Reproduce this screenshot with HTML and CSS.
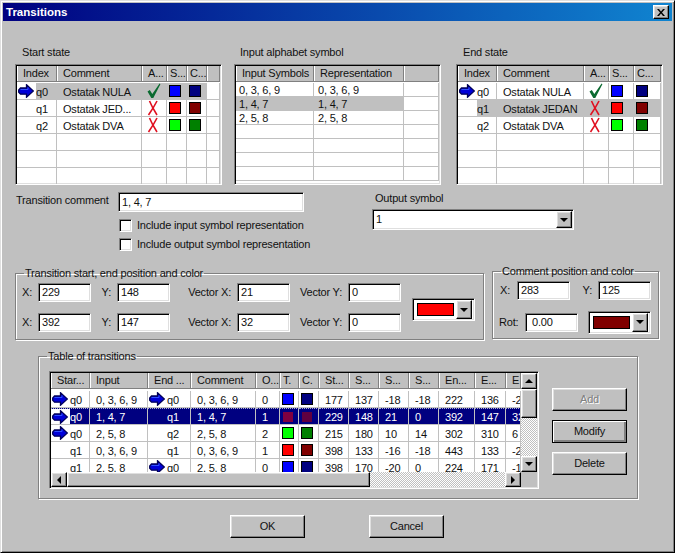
FILE: index.html
```html
<!DOCTYPE html>
<html lang="en">
<head>
<meta charset="utf-8">
<title>Transitions</title>
<link rel="stylesheet" href="styles.css">
</head>
<body>
<svg class="defs" width="0" height="0" aria-hidden="true">
  <symbol id="arrow" viewBox="0 0 16 14"><path d="M8.5 .8 L15.4 7 L8.5 13.2 V10.2 H2.5 L.7 8.2 V6 L2.5 4 H8.5 Z" fill="#0000d8" stroke="#00005a" stroke-width="1.3"/><path d="M2.5 5.5 H10 V3.5" fill="none" stroke="#3050ff" stroke-width="1"/></symbol>
  <symbol id="check" viewBox="0 0 14 16"><path d="M.5 8.5 L2.8 7 L5.3 11 L12.6 .6 L13.4 1.2 L6.3 15 H4.3 Z" fill="#0a6a30"/></symbol>
  <symbol id="cross" viewBox="0 0 12 16"><path d="M2.5 1 Q5 7 10 15 M10 1 Q7 7 1.5 15" fill="none" stroke="#e01020" stroke-width="1.6"/></symbol>
  <symbol id="x-close" viewBox="0 0 8 7"><path d="M0 0 H2 L4 2.5 L6 0 H8 L5 3.5 L8 7 H6 L4 4.5 L2 7 H0 L3 3.5 Z" fill="#000"/></symbol>
</svg>
<div class="window">
  <header class="titlebar">
    <span class="title">Transitions</span>
    <span class="raised closebtn"><svg class="close-icon"><use href="#x-close"/></svg></span>
  </header>
  <main class="content">
    <section class="panes">
      <div class="pane">
        <div class="pane-label">Start state</div>
        <div class="sunken list">
          <div class="row states-a head"><span class="hc">Index</span><span class="hc">Comment</span><span class="hc">A...</span><span class="hc ctr">S...</span><span class="hc ctr">C...</span><span class="hc"></span></div>
          <div class="row states-a sel"><span class="c idx"><span class="iconbox"><svg class="arrow"><use href="#arrow"/></svg></span><span class="idxt">q0</span></span><span class="c">Ostatak NULA</span><span class="c mid"><svg class="chk"><use href="#check"/></svg></span><span class="c mid"><i class="sw blue"></i></span><span class="c mid"><i class="sw navy"></i></span><span class="c blank"></span></div>
          <div class="row states-a"><span class="c idx"><span class="iconbox"></span><span class="idxt">q1</span></span><span class="c">Ostatak JED...</span><span class="c mid"><svg class="crs"><use href="#cross"/></svg></span><span class="c mid"><i class="sw red"></i></span><span class="c mid"><i class="sw maroon"></i></span><span class="c"></span></div>
          <div class="row states-a"><span class="c idx"><span class="iconbox"></span><span class="idxt">q2</span></span><span class="c">Ostatak DVA</span><span class="c mid"><svg class="crs"><use href="#cross"/></svg></span><span class="c mid"><i class="sw lime"></i></span><span class="c mid"><i class="sw green"></i></span><span class="c"></span></div>
          <div class="row states-a"><span class="c"></span><span class="c"></span><span class="c"></span><span class="c"></span><span class="c"></span><span class="c"></span></div>
          <div class="row states-a"><span class="c"></span><span class="c"></span><span class="c"></span><span class="c"></span><span class="c"></span><span class="c"></span></div>
          <div class="row states-a"><span class="c"></span><span class="c"></span><span class="c"></span><span class="c"></span><span class="c"></span><span class="c"></span></div>
        </div>
      </div>
      <div class="pane">
        <div class="pane-label">Input alphabet symbol</div>
        <div class="sunken list">
          <div class="row symbols head"><span class="hc">Input Symbols</span><span class="hc">Representation</span><span class="hc"></span></div>
          <div class="row symbols tight"><span class="c s">0, 3, 6, 9</span><span class="c s">0, 3, 6, 9</span><span class="c"></span></div>
          <div class="row symbols tight sel"><span class="c s">1, 4, 7</span><span class="c s">1, 4, 7</span><span class="c blank"></span></div>
          <div class="row symbols tight"><span class="c s">2, 5, 8</span><span class="c s">2, 5, 8</span><span class="c"></span></div>
          <div class="row symbols tight"><span class="c"></span><span class="c"></span><span class="c"></span></div>
          <div class="row symbols tight"><span class="c"></span><span class="c"></span><span class="c"></span></div>
          <div class="row symbols tight"><span class="c"></span><span class="c"></span><span class="c"></span></div>
          <div class="row symbols tight"><span class="c"></span><span class="c"></span><span class="c"></span></div>
        </div>
      </div>
      <div class="pane">
        <div class="pane-label">End state</div>
        <div class="sunken list">
          <div class="row states-b head"><span class="hc">Index</span><span class="hc">Comment</span><span class="hc">A...</span><span class="hc ctr">S...</span><span class="hc ctr">C...</span></div>
          <div class="row states-b"><span class="c idx"><span class="iconbox"><svg class="arrow"><use href="#arrow"/></svg></span><span class="idxt">q0</span></span><span class="c">Ostatak NULA</span><span class="c mid"><svg class="chk"><use href="#check"/></svg></span><span class="c mid"><i class="sw blue"></i></span><span class="c mid"><i class="sw navy"></i></span></div>
          <div class="row states-b sel"><span class="c idx"><span class="iconbox"></span><span class="idxt">q1</span></span><span class="c">Ostatak JEDAN</span><span class="c mid"><svg class="crs"><use href="#cross"/></svg></span><span class="c mid"><i class="sw red"></i></span><span class="c mid"><i class="sw maroon"></i></span></div>
          <div class="row states-b"><span class="c idx"><span class="iconbox"></span><span class="idxt">q2</span></span><span class="c">Ostatak DVA</span><span class="c mid"><svg class="crs"><use href="#cross"/></svg></span><span class="c mid"><i class="sw lime"></i></span><span class="c mid"><i class="sw green"></i></span></div>
          <div class="row states-b"><span class="c"></span><span class="c"></span><span class="c"></span><span class="c"></span><span class="c"></span></div>
          <div class="row states-b"><span class="c"></span><span class="c"></span><span class="c"></span><span class="c"></span><span class="c"></span></div>
          <div class="row states-b"><span class="c"></span><span class="c"></span><span class="c"></span><span class="c"></span><span class="c"></span></div>
        </div>
      </div>
    </section>

    <section class="comment-row">
      <div class="comment-col">
        <div class="comment-field"><label class="comment-label">Transition comment</label><span class="sunken input comment-input">1, 4, 7</span></div>
        <div class="checks">
          <div class="check"><span class="sunken checkbox"></span><span>Include input symbol representation</span></div>
          <div class="check"><span class="sunken checkbox"></span><span>Include output symbol representation</span></div>
        </div>
      </div>
      <div class="output-col">
        <div class="output-label">Output symbol</div>
        <div class="sunken combo output-combo"><span class="combo-value">1</span><span class="raised dropbtn"><i class="tri"></i></span></div>
      </div>
    </section>

    <section class="groups">
      <fieldset class="group group-pos">
        <legend>Transition start, end position and color</legend>
        <div class="pos-body">
          <div class="pos-grid">
            <span class="lbl l">X:</span><span class="sunken input">229</span>
            <span class="lbl">Y:</span><span class="sunken input">148</span>
            <span class="lbl">Vector X:</span><span class="sunken input">21</span>
            <span class="lbl">Vector Y:</span><span class="sunken input">0</span>
            <span class="lbl l">X:</span><span class="sunken input">392</span>
            <span class="lbl">Y:</span><span class="sunken input">147</span>
            <span class="lbl">Vector X:</span><span class="sunken input">32</span>
            <span class="lbl">Vector Y:</span><span class="sunken input">0</span>
          </div>
          <div class="sunken combo color-combo"><i class="colorbar red"></i><span class="raised dropbtn"><i class="tri"></i></span></div>
        </div>
      </fieldset>
      <fieldset class="group group-cmt">
        <legend>Comment position and color</legend>
        <div class="cmt-row1">
          <span class="lbl l cmt-x">X:</span><span class="sunken input cmt-in">283</span>
          <span class="lbl cmt-y">Y:</span><span class="sunken input cmt-in">125</span>
        </div>
        <div class="cmt-row2">
          <span class="lbl l cmt-rot">Rot:</span><span class="sunken input cmt-in">0.00</span>
          <div class="sunken combo color-combo cmt-combo"><i class="colorbar maroon"></i><span class="raised dropbtn"><i class="tri"></i></span></div>
        </div>
      </fieldset>
    </section>

    <fieldset class="group group-table">
      <legend>Table of transitions</legend>
      <div class="table-body">
        <div class="sunken lv">
          <div class="lv-view">
            <div class="row trans head"><span class="hc">Star...</span><span class="hc">Input</span><span class="hc">End ...</span><span class="hc">Comment</span><span class="hc">O...</span><span class="hc ctr">T.</span><span class="hc ctr">C.</span><span class="hc">St...</span><span class="hc">S...</span><span class="hc">S...</span><span class="hc">S...</span><span class="hc">En...</span><span class="hc">E...</span><span class="hc">E</span></div>
            <div class="row trans"><span class="c idx"><span class="iconbox"><svg class="arrow"><use href="#arrow"/></svg></span><span class="idxt">q0</span></span><span class="c">0, 3, 6, 9</span><span class="c idx"><span class="iconbox"><svg class="arrow"><use href="#arrow"/></svg></span><span class="idxt">q0</span></span><span class="c">0, 3, 6, 9</span><span class="c">0</span><span class="c mid"><i class="sw blue"></i></span><span class="c mid"><i class="sw navy"></i></span><span class="c">177</span><span class="c">137</span><span class="c">-18</span><span class="c">-18</span><span class="c">222</span><span class="c">136</span><span class="c">-2</span></div>
            <div class="row trans picked"><span class="c idx"><span class="iconbox"><svg class="arrow"><use href="#arrow"/></svg></span><span class="idxt">q0</span></span><span class="c">1, 4, 7</span><span class="c idx"><span class="iconbox"></span><span class="idxt">q1</span></span><span class="c">1, 4, 7</span><span class="c">1</span><span class="c mid"><i class="sw dim-a"></i></span><span class="c mid"><i class="sw dim-b"></i></span><span class="c">229</span><span class="c">148</span><span class="c">21</span><span class="c">0</span><span class="c">392</span><span class="c">147</span><span class="c">32</span></div>
            <div class="row trans"><span class="c idx"><span class="iconbox"><svg class="arrow"><use href="#arrow"/></svg></span><span class="idxt">q0</span></span><span class="c">2, 5, 8</span><span class="c idx"><span class="iconbox"></span><span class="idxt">q2</span></span><span class="c">2, 5, 8</span><span class="c">2</span><span class="c mid"><i class="sw lime"></i></span><span class="c mid"><i class="sw green"></i></span><span class="c">215</span><span class="c">180</span><span class="c">10</span><span class="c">14</span><span class="c">302</span><span class="c">310</span><span class="c">6</span></div>
            <div class="row trans"><span class="c idx"><span class="iconbox"></span><span class="idxt">q1</span></span><span class="c">0, 3, 6, 9</span><span class="c idx"><span class="iconbox"></span><span class="idxt">q1</span></span><span class="c">0, 3, 6, 9</span><span class="c">1</span><span class="c mid"><i class="sw red"></i></span><span class="c mid"><i class="sw maroon"></i></span><span class="c">398</span><span class="c">133</span><span class="c">-16</span><span class="c">-18</span><span class="c">443</span><span class="c">133</span><span class="c">-2</span></div>
            <div class="row trans"><span class="c idx"><span class="iconbox"></span><span class="idxt">q1</span></span><span class="c">2, 5, 8</span><span class="c idx"><span class="iconbox"><svg class="arrow"><use href="#arrow"/></svg></span><span class="idxt">q0</span></span><span class="c">2, 5, 8</span><span class="c">0</span><span class="c mid"><i class="sw blue"></i></span><span class="c mid"><i class="sw navy"></i></span><span class="c">398</span><span class="c">170</span><span class="c">-20</span><span class="c">0</span><span class="c">224</span><span class="c">171</span><span class="c">-1</span></div>
          </div>
          <div class="vbar">
            <span class="raised sb-btn"><i class="tri up"></i></span>
            <span class="raised vthumb"></span>
            <span class="dither"></span>
            <span class="raised sb-btn"><i class="tri"></i></span>
          </div>
          <div class="hbar">
            <span class="raised sb-btn"><i class="tri left"></i></span>
            <span class="raised hthumb"></span>
            <span class="dither"></span>
            <span class="raised sb-btn"><i class="tri right"></i></span>
          </div>
          <div class="corner"></div>
        </div>
        <div class="side-btns">
          <button class="raised btn disabled" type="button">Add</button>
          <button class="raised btn default" type="button">Modify</button>
          <button class="raised btn" type="button">Delete</button>
        </div>
      </div>
    </fieldset>

    <footer class="footer">
      <button class="raised btn" type="button">OK</button>
      <button class="raised btn" type="button">Cancel</button>
    </footer>
  </main>
</div>
</body>
</html>
```

FILE: styles.css
```css
* { box-sizing: border-box; }
html, body { margin: 0; padding: 0; }
body {
  width: 675px; height: 553px; overflow: hidden; background: #c0c0c0;
  font: 11px/13px "Liberation Sans", Arial, sans-serif; letter-spacing: -0.2px; color: #111;
}
.defs { position: absolute; }
.window {
  width: 675px; height: 553px; background: #c0c0c0;
  border: 1px solid; border-color: #dfdfdf #000 #000 #dfdfdf;
  box-shadow: inset 1px 1px 0 #fff, inset -1px -1px 0 #808080;
  padding: 2px 2px 0;
}
.titlebar {
  height: 18px; display: flex; align-items: center; justify-content: space-between;
  background: linear-gradient(90deg, #000080, #1084d0); padding: 0 3px;
}
.title { color: #fff; font-weight: bold; font-size: 11.5px; letter-spacing: 0; }
.raised {
  background: #c0c0c0; border: 1px solid; border-color: #fff #000 #000 #fff;
  box-shadow: inset -1px -1px 0 #808080, inset 1px 1px 0 #dfdfdf;
}
.closebtn { width: 16px; height: 14px; display: flex; align-items: center; justify-content: center; }
.close-icon { width: 8px; height: 7px; }
.content { padding-left: 12px; }
.sunken {
  background: #fff; border: 1px solid; border-color: #808080 #fff #fff #808080;
  box-shadow: inset 1px 1px 0 #000, inset -1px -1px 0 #dfdfdf; padding: 1px;
}

/* top lists */
.panes { display: flex; padding-top: 25px; gap: 12px; }
.pane { width: 207px; }
.pane:last-child { margin-left: 3px; }
.pane-label { height: 18px; padding: 0 0 0 7px; }
.pane:nth-child(2) .pane-label { padding-left: 6px; }
.list { height: 121px; overflow: hidden; }
.row { display: grid; height: 17px; }
.states-a { grid-template-columns: 40px 85px 25px 20px 20px 13px; }
.states-b { grid-template-columns: 39px 87px 25px 25px 27px; }
.symbols { grid-template-columns: 78px 90px 35px; }
.trans { grid-template-columns: 39px 58px 43px 65px 24px 19px 20px 30px 30px 30px 30px 36px 31px 15px; }
.head { height: 16px; margin-bottom: 1px; }
.tight { height: 14px; }
.hc {
  background: #c0c0c0; padding-left: 6px; line-height: 15px; white-space: nowrap; overflow: hidden;
  border-right: 1px solid #808080; border-bottom: 1px solid #808080; box-shadow: inset 1px 0 0 #fff;
}
.hc.ctr { padding-left: 3px; }
.c {
  display: flex; align-items: center; padding: 2px 0 0 6px; white-space: nowrap; overflow: hidden;
  border-right: 1px solid #c0c0c0; border-bottom: 1px solid #c0c0c0;
}
.tight .c { padding-top: 1px; }
.c.s { padding-left: 3px; }
.symbols .c.s + .c.s { padding-left: 4px; }
.c.idx { padding: 0; }
.c.mid { padding: 0 0 0 2px; }
.iconbox { width: 19px; height: 100%; flex: none; display: flex; align-items: center; background: #fff; }
.idxt { flex: 1; height: 100%; padding-top: 2px; display: flex; align-items: center; }
.arrow { width: 16px; height: 14px; margin-left: 1px; }
.chk { width: 14px; height: 16px; margin-left: 3px; }
.crs { width: 12px; height: 16px; margin-left: 3px; }
.sel .c { background: #c0c0c0; }
.sel .c.idx { background: #fff; }
.sel .idxt { background: #c0c0c0; }
.sel .blank { background: #fff; }
.sw { display: block; width: 12px; height: 12px; border: 1px solid #000; }
.blue { background: #0000ff; }
.navy { background: #000080; }
.red { background: #ff0000; }
.maroon { background: #800000; }
.lime { background: #00ff00; }
.green { background: #008000; }
.dim-a { background: #800040; border-color: #000080; }
.dim-b { background: #600040; border-color: #000080; }

/* comment row */
.comment-row { display: flex; height: 80px; padding-top: 7px; }
.comment-col { width: 357px; }
.comment-field { display: flex; height: 20px; align-items: center; }
.comment-label { width: 103px; padding: 0 0 3px 1px; }
.input { display: flex; align-items: center; padding: 0 2px 0 3px; height: 19px; }
.comment-input { width: 186px; height: 20px; }
.checks { padding: 7px 0 0 104px; }
.check { display: flex; align-items: center; height: 13px; margin-bottom: 6px; gap: 5px; }
.checkbox { width: 13px; height: 13px; background: #fff; flex: none; }
.output-label { height: 17px; padding-left: 3px; }
.combo { display: flex; align-items: center; justify-content: space-between; }
.output-combo { width: 202px; height: 21px; }
.combo-value { padding-left: 2px; }
.dropbtn { width: 16px; height: 17px; display: flex; align-items: center; justify-content: center; flex: none; }
.tri {
  display: block; width: 0; height: 0; border-style: solid; border-color: #000 transparent transparent;
  border-width: 4px 4px 0;
}
.tri.up { border-color: transparent transparent #000; border-width: 0 4px 4px; }
.tri.left { border-color: transparent #000 transparent transparent; border-width: 4px 4px 4px 0; }
.tri.right { border-color: transparent transparent transparent #000; border-width: 4px 0 4px 4px; }

/* groups */
.group {
  margin: 0; padding: 0; min-width: 0; border: 1px solid #808080;
  box-shadow: 1px 1px 0 #fff, inset 1px 1px 0 #fff;
}
legend { padding: 0 1px; margin-left: 8px; line-height: 13px; }
.groups { display: flex; align-items: flex-start; gap: 8px; }
.group-pos { width: 469px; height: 73px; margin-top: 2px; }
.pos-body { display: flex; padding: 3px 0 0 6px; align-items: flex-start; }
.pos-grid {
  display: grid; grid-template-columns: 16px 53px 26px 53px 67px 53px 58px 53px;
  grid-auto-rows: 19px; row-gap: 11px;
}
.lbl { display: flex; align-items: center; justify-content: flex-end; padding-right: 6px; white-space: nowrap; }
.lbl.l { justify-content: flex-start; padding-right: 0; }
.color-combo { width: 63px; height: 23px; padding: 2px; }
.pos-body .color-combo { margin: 15px 0 0 11px; }
.colorbar { display: block; width: 37px; height: 13px; border: 1px solid #000; margin-left: 2px; }
.color-combo .dropbtn { height: 19px; }
.group-cmt { width: 167px; height: 74px; }
.cmt-row1 { display: flex; padding: 3px 0 0 7px; height: 22px; }
.cmt-x { width: 17px; }
.cmt-y { width: 28px; }
.cmt-in { width: 53px; }
.cmt-row2 { display: flex; padding: 11px 0 0 6px; align-items: center; height: 33px; }
.cmt-row2 .input { padding-left: 6px; }
.cmt-rot { width: 26px; }
.cmt-combo { margin: 0 0 0 10px; }

/* table */
.group-table { width: 600px; height: 149px; margin: 10px 0 0 23px; }
.table-body { display: flex; padding: 8px 0 0 10px; }
.lv {
  width: 490px; height: 118px; display: grid;
  grid-template-columns: 470px 16px; grid-template-rows: 99px 15px;
}
.lv-view { overflow: hidden; }
.head.trans { margin-bottom: 2px; }
.vbar { display: flex; flex-direction: column; }
.hbar { display: flex; }
.sb-btn { width: 16px; height: 16px; flex: none; display: flex; align-items: center; justify-content: center; }
.hbar .sb-btn { height: 15px; }
.vthumb { height: 29px; flex: none; }
.hthumb { width: 303px; flex: none; }
.dither {
  flex: 1; background: conic-gradient(#c0c0c0 25%, #fff 0 50%, #c0c0c0 0 75%, #fff 0) 0 0 / 2px 2px;
}
.corner { background: #c0c0c0; }
.picked .c { background: #000080; color: #fff; border-top: 1px dotted #b0b0d0; border-bottom: 1px solid #c0c0c0; padding-top: 1px; }
.picked .c.idx { background: #000080; padding-top: 0; }
.picked .c.mid { padding-top: 0; }
.picked .iconbox { background: #fff; }
.picked .iconbox:empty { background: #000080; }
.side-btns { display: flex; flex-direction: column; padding: 17px 0 0 13px; gap: 9px; }
.btn {
  width: 75px; height: 23px; font: inherit; letter-spacing: inherit; color: #111; padding: 0; display: block;
}
.btn.default { outline: 1px solid #000; outline-offset: -1px; box-shadow: inset 1px 1px 0 #fff, inset -2px -2px 0 #808080; }
.btn.disabled { color: #808080; text-shadow: 1px 1px 0 #fff; }
.footer { display: flex; padding: 16px 0 0 215px; gap: 64px; }
```
